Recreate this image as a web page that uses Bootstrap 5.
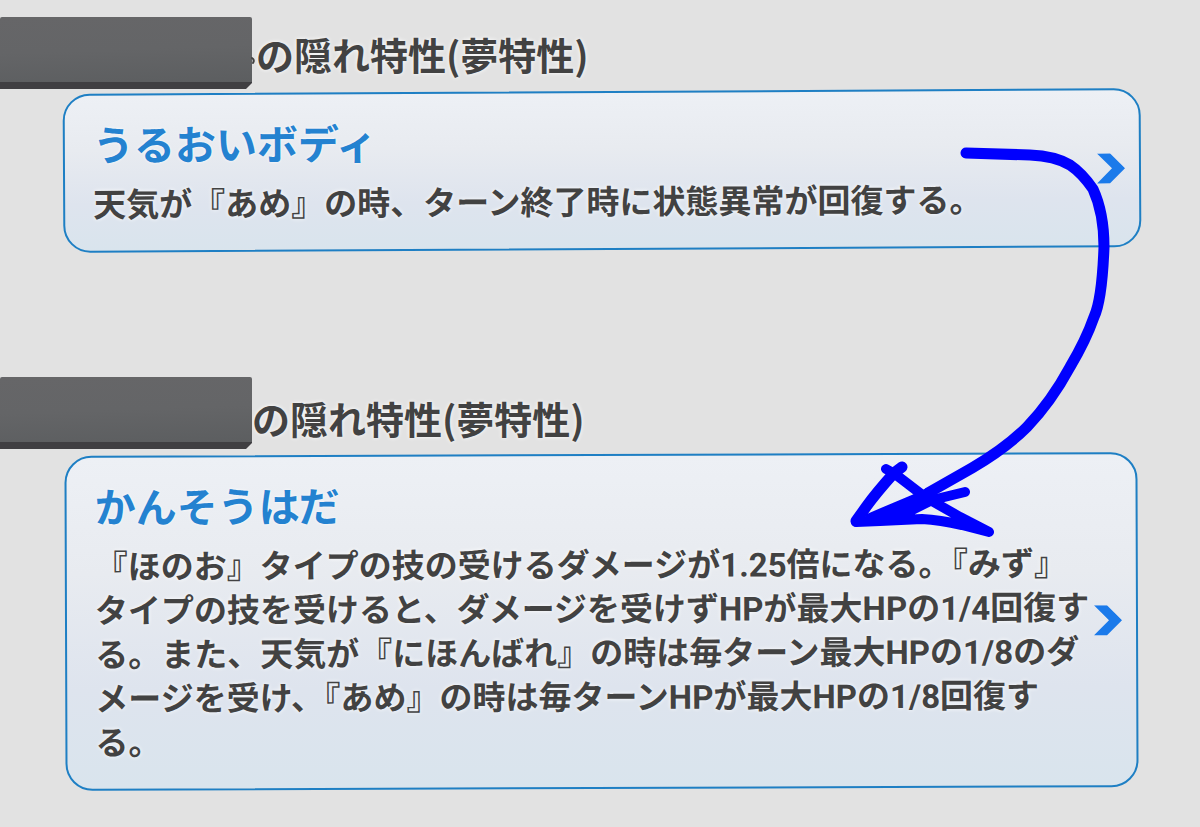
<!DOCTYPE html>
<html lang="ja">
<head>
<meta charset="utf-8">
<meta name="viewport" content="width=device-width, initial-scale=1">
<title>隠れ特性(夢特性)</title>
<link href="https://cdn.jsdelivr.net/npm/bootstrap@5.3.0/dist/css/bootstrap.min.css" rel="stylesheet">
<style>
body{background:#e2e2e2;color:#424242;font-family:Roboto,"Noto Sans CJK JP",sans-serif;font-weight:700}
.page-wrap{padding:17px 0 37px}
.ability + .ability{margin-top:127px}
.cover{width:252px;height:72px;background:linear-gradient(178deg,#666668,#646567 50%,#5c5e60);border-bottom:7px solid #403f42;border-radius:2px 2px 0 0;clip-path:polygon(0 0,100% 0,100% calc(100% - 6px),calc(100% - 6px) 100%,0 100%)}
.group-title{font-family:"Noto Sans CJK JP",sans-serif;font-size:38px;line-height:54px;font-weight:700;text-shadow:0 0 4px #fff}
.ability-card{margin:2px 59px 0 63px;padding:25px 14px 23px 28px;border:2px solid #1e7fc4;border-radius:27px;background:linear-gradient(#edf0f5,#e8ebf0 35%,#dee4ee 70%,#d9e4ed);transform:rotate(-.3deg)}
.ability + .ability .ability-card{margin:5px 62px 0 65px;transform:rotate(-.2deg)}
.ability-name{font-size:41px;line-height:52px;font-weight:700;color:#2482d0;text-shadow:0 0 3px #fff}
.ability-text{font-size:33px;line-height:44px;color:#424242;text-shadow:0 0 4px #fff;margin-top:11px}
.chevron{width:28px;height:32px}
.pen{pointer-events:none}
</style>
</head>
<body>
<main class="page-wrap position-relative">
  <section class="ability">
    <div class="d-flex align-items-end">
      <div class="cover flex-shrink-0"></div>
      <h2 class="group-title mb-2 ms-1">の隠れ特性(夢特性)</h2>
    </div>
    <a href="#" class="ability-card d-flex align-items-center text-decoration-none">
      <div class="flex-grow-1">
        <h3 class="ability-name mb-0">うるおいボディ</h3>
        <p class="ability-text mb-0">天気が『あめ』の時、ターン終了時に状態異常が回復する。</p>
      </div>
      <svg class="chevron flex-shrink-0" viewBox="0 0 28 32" aria-hidden="true"><path d="M0 0H13L28 15 13 30H0L15 15Z" fill="#1b7aea"/></svg>
    </a>
  </section>
  <section class="ability">
    <div class="d-flex align-items-end">
      <div class="cover flex-shrink-0"></div>
      <h2 class="group-title mb-1">の隠れ特性(夢特性)</h2>
    </div>
    <a href="#" class="ability-card d-flex align-items-center text-decoration-none">
      <div class="flex-grow-1">
        <h3 class="ability-name mb-0">かんそうはだ</h3>
        <p class="ability-text mb-0">『ほのお』タイプの技の受けるダメージが1.25倍になる。『みず』タイプの技を受けると、ダメージを受けずHPが最大HPの1/4回復する。また、天気が『にほんばれ』の時は毎ターン最大HPの1/8のダメージを受け、『あめ』の時は毎ターンHPが最大HPの1/8回復する。</p>
      </div>
      <svg class="chevron flex-shrink-0" viewBox="0 0 28 32" aria-hidden="true"><path d="M0 0H13L28 15 13 30H0L15 15Z" fill="#1b7aea"/></svg>
    </a>
  </section>
  <svg class="pen position-absolute top-0 start-0 w-100" viewBox="0 0 1200 827" fill="none" stroke="#0000fe" stroke-width="10" stroke-linecap="round" stroke-linejoin="round" aria-hidden="true">
    <path d="M252 58Q255 60 253 63" stroke="#424242" stroke-width="2"/>
    <path d="M966 153L1030 155Q1055 156 1070 165Q1082 173 1093 189Q1104 213 1104 247Q1102 300 1094 317Q1086 340 1070 367Q1051 402 1027 427Q1006 448 972 468L928 493" stroke-width="11"/>
    <path d="M928 493L922 496L870 518M965 492L932 500L912 510L870 520M886 469L895 474L925 497L960 517L989 532L962 525Q940 520 922 519L880 521L856 522"/>
    <path d="M856 521L866 507Q876 493 894 473L902 467" stroke-width="11"/>
    <path d="M868 519L924 496L928 500L914 508L900 518L868 521Z" fill="#0000fe" stroke-width="2"/>
  </svg>
</main>
<script src="https://cdn.jsdelivr.net/npm/bootstrap@5.3.0/dist/js/bootstrap.bundle.min.js"></script>
</body>
</html>
